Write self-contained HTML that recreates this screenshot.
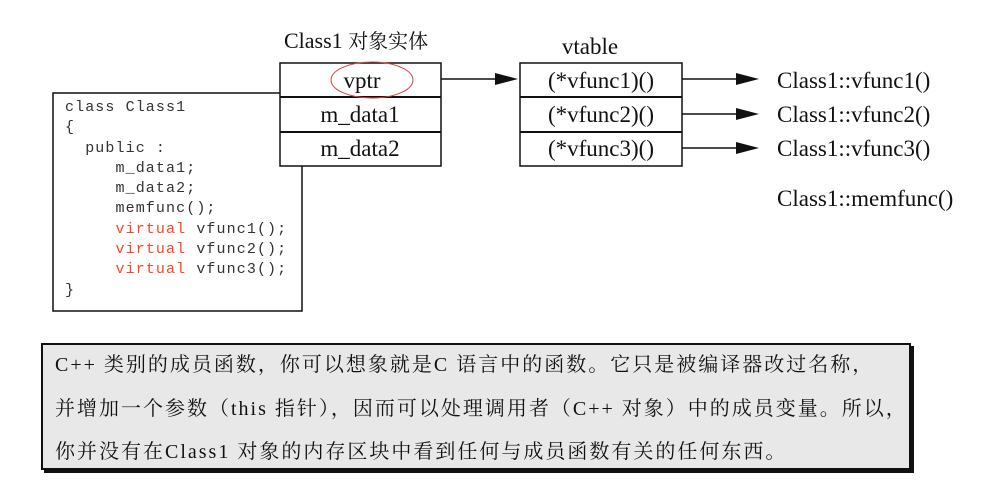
<!DOCTYPE html>
<html><head><meta charset="utf-8"><style>
body{margin:0;width:985px;height:494px;background:#fff;overflow:hidden;position:relative;font-family:"Liberation Serif","Noto Serif CJK SC",serif;}
.a{position:absolute;white-space:pre;}
.code{font-family:"Liberation Mono",monospace;font-size:15px;letter-spacing:1.1px;color:#333;line-height:20.3px;}
.r{color:#ff4422;}
.box{position:absolute;left:41px;top:343px;width:866px;height:123px;background:#e8e8e8;border:2px solid #111;box-shadow:3px 3px 0 #111;}
.t{position:absolute;left:12px;font-size:20px;color:#111;white-space:nowrap;font-family:"Liberation Serif","Noto Serif CJK SC",serif;letter-spacing:2px;}
</style></head><body>
<svg width="985" height="330" style="position:absolute;left:0;top:0" font-family="Liberation Serif, Noto Serif CJK SC, serif" font-size="23">
<rect x="53" y="93" width="249" height="218" fill="#fff" stroke="#111" stroke-width="1.5"/>
<rect x="280" y="63" width="161" height="103" fill="#fff" stroke="#111" stroke-width="1.5"/>
<line x1="280" y1="97" x2="441" y2="97" stroke="#111" stroke-width="2"/>
<line x1="280" y1="132" x2="441" y2="132" stroke="#111" stroke-width="2"/>
<rect x="520" y="63" width="162" height="103" fill="#fff" stroke="#111" stroke-width="1.5"/>
<line x1="520" y1="97" x2="682" y2="97" stroke="#111" stroke-width="2"/>
<line x1="520" y1="132" x2="682" y2="132" stroke="#111" stroke-width="2"/>
<ellipse cx="372" cy="80" rx="41" ry="18" fill="none" stroke="#e04040" stroke-width="1"/>
<g stroke="#111" stroke-width="1.5">
<line x1="441" y1="79" x2="500" y2="79"/>
<line x1="682" y1="79" x2="742" y2="79"/>
<line x1="682" y1="114" x2="742" y2="114"/>
<line x1="682" y1="148" x2="742" y2="148"/>
</g>
<g fill="#111">
<polygon points="518,79 495,73 495,85"/>
<polygon points="759,79 736,73 736,85"/>
<polygon points="759,114 736,108 736,120"/>
<polygon points="759,148 736,142 736,154"/>
</g>
<g fill="#111" text-anchor="middle">
<text x="362" y="88">vptr</text>
<text x="360" y="122">m_data1</text>
<text x="360" y="156">m_data2</text>
<text x="601" y="88">(*vfunc1)()</text>
<text x="601" y="122">(*vfunc2)()</text>
<text x="601" y="156">(*vfunc3)()</text>
<text x="590" y="54">vtable</text>
</g>
<g fill="#111">
<text x="284" y="48" font-size="22">Class1 <tspan font-size="20">对象实体</tspan></text>
<text x="777" y="88">Class1::vfunc1()</text>
<text x="777" y="122">Class1::vfunc2()</text>
<text x="777" y="156">Class1::vfunc3()</text>
<text x="777" y="206">Class1::memfunc()</text>
</g>
</svg>
<div class="a code" style="left:65px;top:98px;">class Class1
{
  public :
     m_data1;
     m_data2;
     memfunc();
     <span class="r">virtual</span> vfunc1();
     <span class="r">virtual</span> vfunc2();
     <span class="r">virtual</span> vfunc3();
}</div>
<div class="box">
<div class="t" style="top:3px;">C++ 类别的成员函数，你可以想象就是C 语言中的函数。它只是被编译器改过名称，</div>
<div class="t" style="top:47px;">并增加一个参数（this 指针），因而可以处理调用者（C++ 对象）中的成员变量。所以，</div>
<div class="t" style="top:90px;">你并没有在Class1 对象的内存区块中看到任何与成员函数有关的任何东西。</div>
</div>
</body></html>
